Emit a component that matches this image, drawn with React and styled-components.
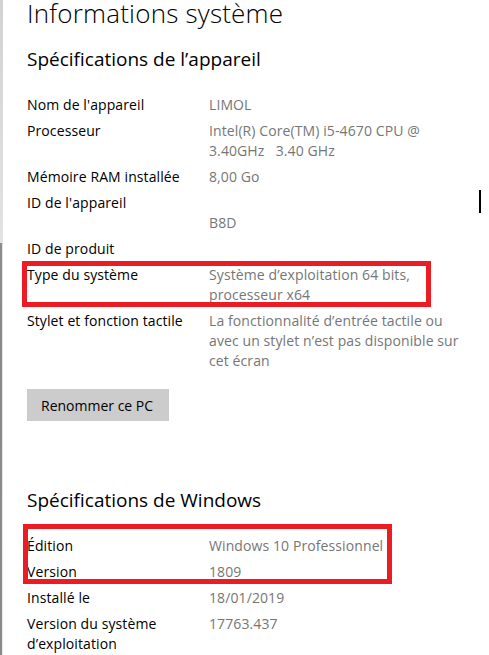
import React from "react";
import styled, { createGlobalStyle } from "styled-components";

const Global = createGlobalStyle`
  html, body { margin: 0; padding: 0; background: #ffffff; }
  body { font-family: "Open Sans", "Noto Sans", sans-serif; color: #000; }
`;

const Page = styled.div`
  position: relative;
  display: flex;
  width: 489px;
  height: 655px;
  overflow: hidden;
  background: #fff;
`;

const Rail = styled.div`
  width: 3px;
  flex: none;
  display: flex;
  flex-direction: column;
  background: linear-gradient(to bottom, #d2d2d2, #e4e4e4 40%, #ececec);
`;

const Thumb = styled.div`
  margin-top: 243px;
  flex: 1;
  width: 2px;
  background: #8a8a8a;
`;

const Content = styled.main`
  flex: 1;
  padding-left: 24px;
  display: flex;
  flex-direction: column;
  align-items: flex-start;
`;

const Title = styled.h1`
  margin: 0;
  font-size: 26px;
  line-height: 26px;
  letter-spacing: 0.2px;
  font-weight: 300;
  color: #000;
`;

const Heading = styled.h2`
  margin: ${(p) => p.$top}px 0 0;
  font-size: 19px;
  line-height: 28px;
  font-weight: 400;
  color: #000;
`;

const List = styled.div`
  margin-top: 22px;
  display: flex;
  flex-direction: column;
  gap: 6px;
`;

const Row = styled.div`
  display: grid;
  grid-template-columns: 182px auto;
  font-size: 14px;
  line-height: 20px;
  letter-spacing: 0.1px;
  white-space: nowrap;
`;

const Label = styled.span`
  color: #000;
`;

const Value = styled.span`
  color: #767676;
`;

const Marked = styled.div`
  position: relative;
  display: flex;
  flex-direction: column;
  gap: 6px;
`;

const Frame = styled.div`
  position: absolute;
  top: ${(p) => p.$top}px;
  left: ${(p) => p.$left}px;
  width: ${(p) => p.$w}px;
  height: ${(p) => p.$h}px;
  box-sizing: border-box;
  border: 5px solid #ec1c24;
  pointer-events: none;
`;

const Button = styled.button`
  margin-top: 18px;
  width: 142px;
  height: 32px;
  padding: 0 0 0 14px;
  border: none;
  background: #cccccc;
  color: #000;
  font-family: "Open Sans", "Noto Sans", sans-serif;
  font-size: 14px;
  text-align: left;
`;

const Caret = styled.div`
  position: absolute;
  left: 479px;
  top: 190px;
  width: 2px;
  height: 23px;
  background: #000;
`;

const Item = ({ label, value }) => (
  <Row>
    <Label>{label}</Label>
    <Value>{value}</Value>
  </Row>
);

export default function App() {
  return (
    <>
      <Global />
      <Page>
        <Rail>
          <Thumb />
        </Rail>
        <Content>
          <Title>Informations système</Title>
          <Heading $top={19}>Spécifications de l’appareil</Heading>
          <List>
            <Item label="Nom de l'appareil" value="LIMOL" />
            <Item
              label="Processeur"
              value={<>Intel(R) Core(TM) i5-4670 CPU @<br />3.40GHz&nbsp;&nbsp; 3.40 GHz</>}
            />
            <Item label="Mémoire RAM installée" value="8,00 Go" />
            <Item label="ID de l'appareil" value={<>&nbsp;<br />B8D</>} />
            <Item label="ID de produit" value="" />
            <Marked>
              <Frame $top={-4} $left={-5} $w={409} $h={46} />
              <Item
                label="Type du système"
                value={<>Système d’exploitation 64 bits,<br />processeur x64</>}
              />
            </Marked>
            <Item
              label="Stylet et fonction tactile"
              value={<>La fonctionnalité d’entrée tactile ou<br />avec un stylet n’est pas disponible sur<br />cet écran</>}
            />
          </List>
          <Button>Renommer ce PC</Button>
          <Heading $top={65}>Spécifications de Windows</Heading>
          <List>
            <Marked>
              <Frame $top={-12} $left={-4} $w={369} $h={60} />
              <Item label="Édition" value="Windows 10 Professionnel" />
              <Item label="Version" value="1809" />
            </Marked>
            <Item label="Installé le" value="18/01/2019" />
            <Item
              label={<>Version du système<br />d’exploitation</>}
              value="17763.437"
            />
          </List>
        </Content>
        <Caret />
      </Page>
    </>
  );
}
